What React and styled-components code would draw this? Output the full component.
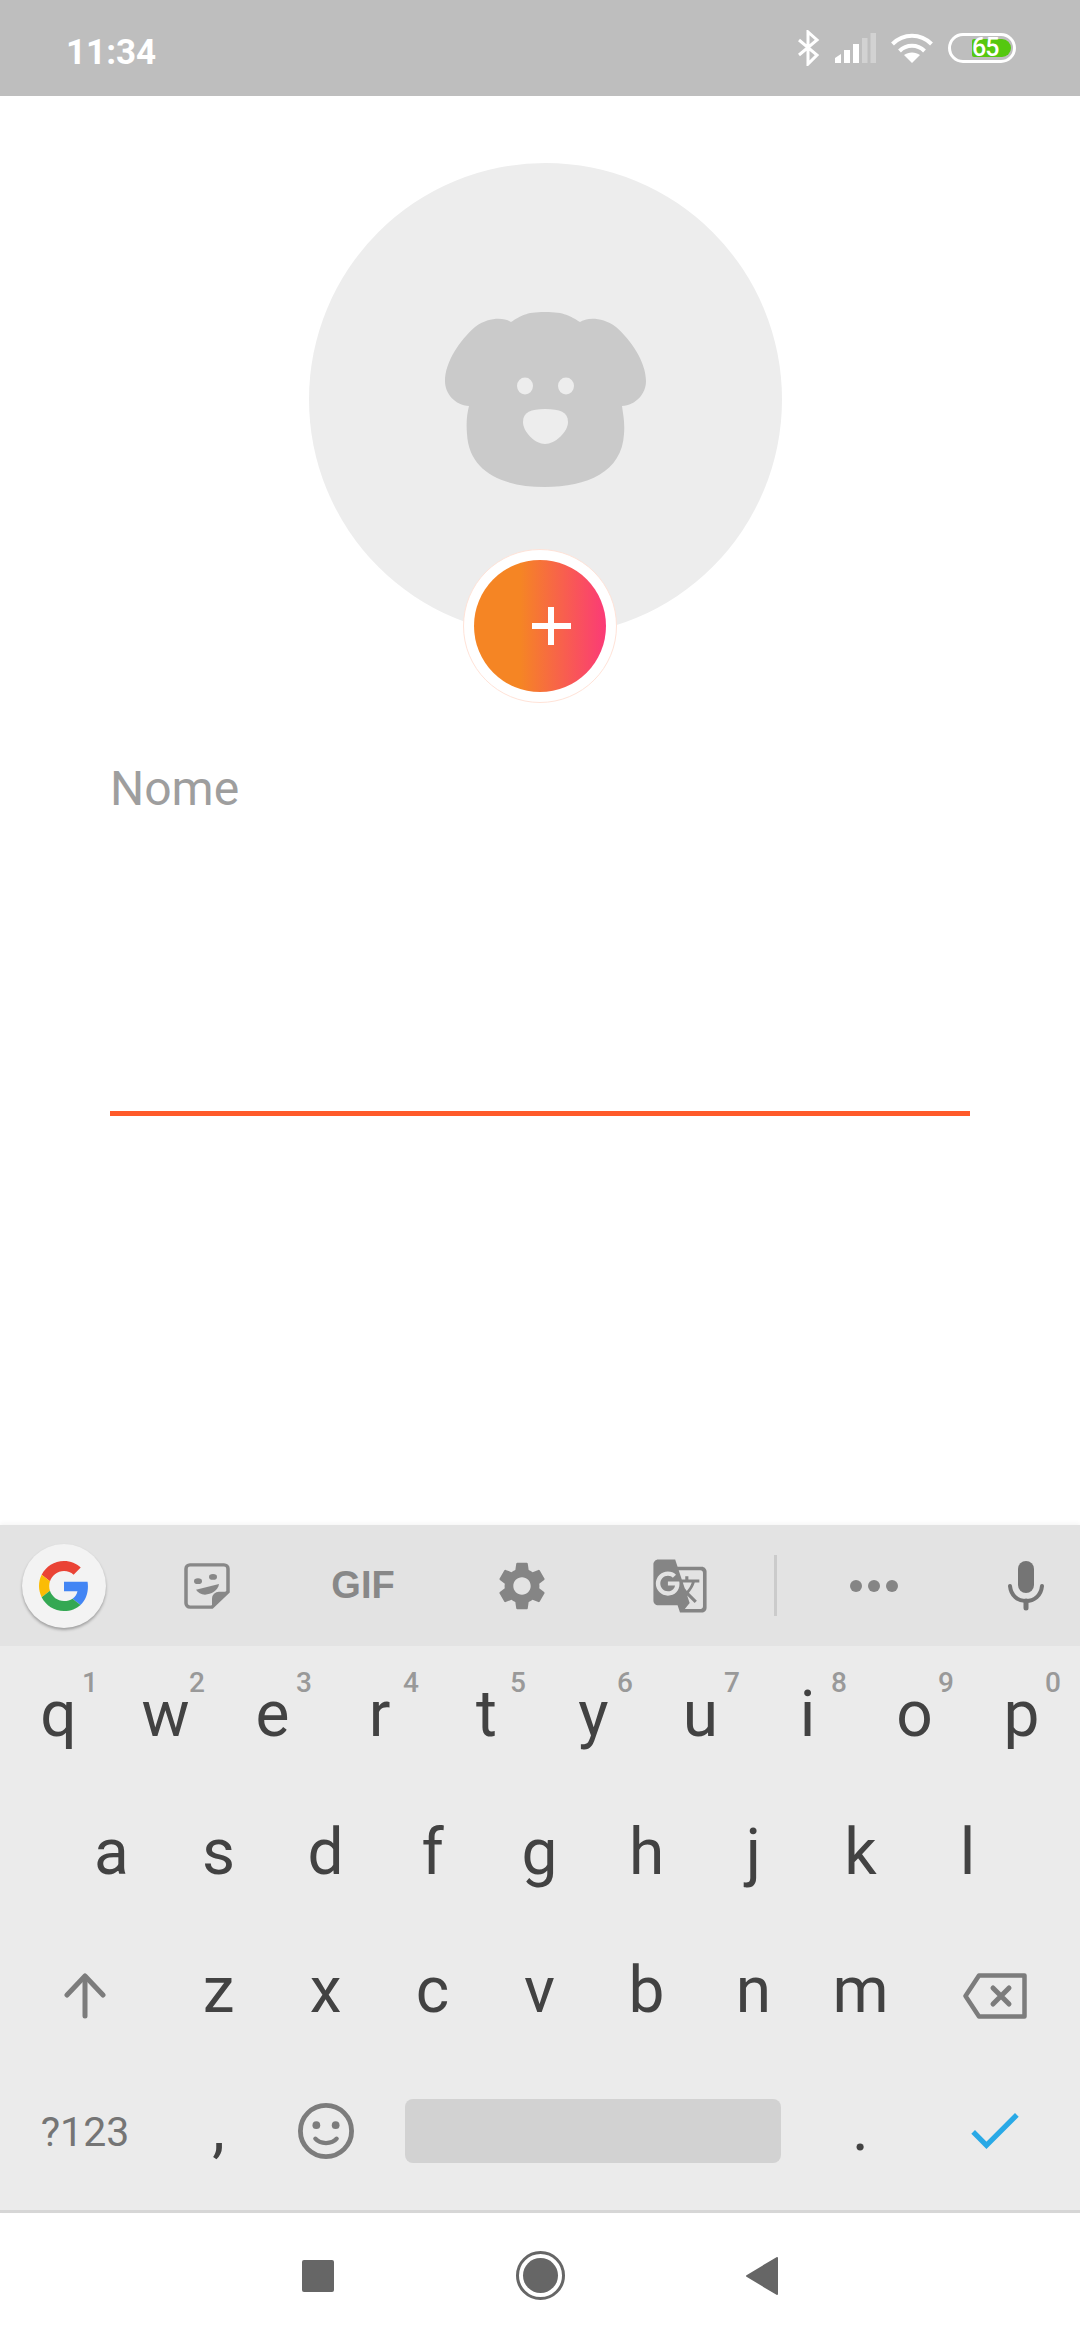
import styled, { createGlobalStyle } from "styled-components";
import { MdSettings, MdGTranslate } from "react-icons/md";

const GlobalStyle = createGlobalStyle`
  html, body {
    margin: 0;
    padding: 0;
    background: #ffffff;
    font-family: "Roboto", "Liberation Sans", sans-serif;
  }
`;

const row1 = [
  ["q", "1"], ["w", "2"], ["e", "3"], ["r", "4"], ["t", "5"],
  ["y", "6"], ["u", "7"], ["i", "8"], ["o", "9"], ["p", "0"],
];
const row2 = ["a", "s", "d", "f", "g", "h", "j", "k", "l"];
const row3 = ["z", "x", "c", "v", "b", "n", "m"];

const DogIcon = () => (
  <svg width="201" height="176" viewBox="0 0 201 176">
    <path
      fill="#cacaca"
      d="M100 0C80 0 76 4 66 10C60 6 45 4 30 15C15 28 0 50 0 69C0 82 10 93 24 94C22 102 21 110 22 122C24 160 58 175 100 175C142 175 177 160 179 122C180 110 178 102 177 94C191 93 201 82 201 69C201 50 186 28 171 15C156 4 141 6 135 10C125 4 120 0 100 0Z"
    />
    <ellipse cx="80" cy="74" rx="8" ry="8.5" fill="#ededed" />
    <ellipse cx="121" cy="74" rx="8" ry="8.5" fill="#ededed" />
    <path
      fill="#ededed"
      d="M100 97C115 97 123 100 123 110C123 120 110 132 100 132C90 132 78 120 78 110C78 100 86 97 100 97Z"
    />
  </svg>
);

const BluetoothIcon = () => (
  <svg width="23" height="36" viewBox="0 0 23 36" fill="none" stroke="#fff" strokeWidth="3">
    <path d="M2 10L20 25L11 34V2L20 10L2 25" />
  </svg>
);

const SignalIcon = () => (
  <svg width="41" height="30" viewBox="0 0 41 30">
    <path fill="#fff" d="M0 30V25L6 21V30Z" />
    <rect x="9" y="17" width="6" height="13" fill="#fff" />
    <rect x="18" y="11" width="6" height="19" fill="#fff" />
    <rect x="27" y="5" width="5.5" height="25" fill="#d2d2d2" />
    <rect x="35.5" y="0" width="5.5" height="30" fill="#d2d2d2" />
  </svg>
);

const WifiIcon = () => (
  <svg width="42" height="30" viewBox="0 0 42 30" fill="none" stroke="#fff" strokeWidth="4">
    <path d="M1.5 11C12.5 0 29.5 0 40.5 11" />
    <path d="M8.5 18C15.5 11 26.5 11 33.5 18" />
    <path fill="#fff" stroke="none" d="M13 22C17.5 18.5 24.5 18.5 29 22L21 30Z" />
  </svg>
);

const GoogleLogo = () => (
  <svg width="50" height="50" viewBox="0 0 48 48">
    <path fill="#EA4335" d="M24 9.5c3.54 0 6.71 1.22 9.21 3.6l6.85-6.85C35.9 2.38 30.47 0 24 0 14.62 0 6.51 5.38 2.56 13.22l7.98 6.19C12.43 13.72 17.74 9.5 24 9.5z" />
    <path fill="#4285F4" d="M46.98 24.55c0-1.57-.15-3.09-.38-4.55H24v9.02h12.94c-.58 2.96-2.26 5.48-4.78 7.18l7.73 6c4.51-4.18 7.09-10.36 7.09-17.65z" />
    <path fill="#FBBC05" d="M10.53 28.59c-.48-1.45-.76-2.99-.76-4.59s.27-3.14.76-4.59l-7.98-6.19C.92 16.46 0 20.12 0 24c0 3.88.92 7.54 2.56 10.78l7.97-6.19z" />
    <path fill="#34A853" d="M24 48c6.48 0 11.93-2.13 15.89-5.81l-7.73-6c-2.15 1.45-4.92 2.3-8.16 2.3-6.26 0-11.57-4.22-13.47-9.91l-7.98 6.19C6.51 42.62 14.62 48 24 48z" />
  </svg>
);

const StickerIcon = () => (
  <svg width="46" height="46" viewBox="0 0 46 48" preserveAspectRatio="none">
    <path
      fill="none"
      stroke="#888"
      strokeWidth="3.5"
      d="M6 2H40a4 4 0 0 1 4 4V30L28 46H6a4 4 0 0 1-4-4V6a4 4 0 0 1 4-4Z"
    />
    <path fill="#888" d="M44.5 30H35a7 7 0 0 0-7 7V46.5Z" />
    <ellipse cx="14" cy="19" rx="4" ry="3" fill="#888" />
    <ellipse cx="29" cy="14.5" rx="4" ry="3" fill="#888" />
    <path fill="#888" d="M12 28L35 22C34 29 27 33 21 33C17 33 14 31 12 28Z" />
  </svg>
);

const MicIcon = () => (
  <svg width="36" height="50" viewBox="0 0 36 50" fill="none" stroke="#757575" strokeLinecap="round">
    <rect x="10" y="0" width="16" height="32" rx="8" fill="#757575" stroke="none" />
    <path strokeWidth="4" d="M2 25C3 35 10 40 18 40C26 40 33 35 34 25" />
    <path strokeWidth="5" d="M18 40V47" />
  </svg>
);

const ShiftIcon = () => (
  <svg width="42" height="46" viewBox="0 0 42 46" fill="none" stroke="#7c7c7c" strokeWidth="5" strokeLinecap="round" strokeLinejoin="round">
    <path d="M21 43V4" />
    <path d="M3 22L21 3L39 22" />
  </svg>
);

const BackspaceIcon = () => (
  <svg width="64" height="46" viewBox="0 0 64 46" fill="none" stroke="#7c7c7c" strokeWidth="4.5" strokeLinejoin="round">
    <path d="M16 2.5H61.5V43.5H16L2.5 23Z" />
    <path strokeLinecap="round" strokeWidth="5" d="M30 15L46 31M46 15L30 31" />
  </svg>
);

const EmojiIcon = () => (
  <svg width="56" height="56" viewBox="0 0 58 58" fill="none" stroke="#7c7c7c">
    <circle cx="29" cy="29" r="26.5" strokeWidth="5" />
    <circle cx="19" cy="23" r="4" fill="#7c7c7c" stroke="none" />
    <circle cx="39" cy="23" r="4" fill="#7c7c7c" stroke="none" />
    <path strokeWidth="4.5" strokeLinecap="round" d="M18 37C23 43 35 43 40 37" />
  </svg>
);

const CheckIcon = () => (
  <svg width="50" height="38" viewBox="0 0 50 40" fill="none" stroke="#29a9e6" strokeWidth="5.5">
    <path d="M2 21L16 35L48 3" />
  </svg>
);

const BackIcon = () => (
  <svg width="32" height="38" viewBox="0 0 32 38">
    <path fill="#666" stroke="#666" strokeWidth="2" strokeLinejoin="round" d="M1 19L31 1V37Z" />
  </svg>
);

export default function App() {
  return (
    <>
      <GlobalStyle />
      <Screen>
        <StatusBar>
          <Clock>11:34</Clock>
          <StatusIcons>
            <BluetoothIcon />
            <SignalIcon />
            <WifiIcon />
            <Battery>
              <BatteryFill />
              <BatteryLevel>65</BatteryLevel>
            </Battery>
          </StatusIcons>
        </StatusBar>

        <Main>
          <Avatar>
            <DogIcon />
            <AddButton>
              <AddCircle>
                <PlusH />
                <PlusV />
              </AddCircle>
            </AddButton>
          </Avatar>
          <Field>
            <FieldLabel>Nome</FieldLabel>
            <FieldLine />
          </Field>
        </Main>

        <Keyboard>
          <Toolbar>
            <ToolSlot $w={128}>
              <GoogleButton>
                <GoogleLogo />
              </GoogleButton>
            </ToolSlot>
            <ToolSlot $w={158}>
              <StickerIcon />
            </ToolSlot>
            <ToolSlot $w={154}>
              <GifLabel>GIF</GifLabel>
            </ToolSlot>
            <ToolSlot $w={164}>
              <MdSettings size={58} color="#858585" />
            </ToolSlot>
            <ToolSlot $w={152}>
              <MdGTranslate size={58} color="#858585" />
            </ToolSlot>
            <ToolSlot $w={39}>
              <ToolDivider />
            </ToolSlot>
            <ToolSlot $w={158}>
              <Dots>
                <Dot />
                <Dot />
                <Dot />
              </Dots>
            </ToolSlot>
            <MicSlot>
              <MicIcon />
            </MicSlot>
          </Toolbar>

          <KeyRow $pad={5}>
            {row1.map(([letter, hint]) => (
              <Key key={letter} $w={107}>
                {letter}
                <KeyHint>{hint}</KeyHint>
              </Key>
            ))}
          </KeyRow>
          <KeyRow $pad={58}>
            {row2.map((letter) => (
              <Key key={letter} $w={107}>
                {letter}
              </Key>
            ))}
          </KeyRow>
          <KeyRow $pad={5}>
            <IconKey $w={160} $shift={5}>
              <ShiftIcon />
            </IconKey>
            {row3.map((letter) => (
              <Key key={letter} $w={107}>
                {letter}
              </Key>
            ))}
            <IconKey $w={161} $shift={5}>
              <BackspaceIcon />
            </IconKey>
          </KeyRow>
          <KeyRow $pad={5}>
            <SymbolKey $w={160}>?123</SymbolKey>
            <Key $w={107}>,</Key>
            <IconKey $w={107} $shift={2}>
              <EmojiIcon />
            </IconKey>
            <SpaceKey>
              <SpaceBar />
            </SpaceKey>
            <Key $w={107}>.</Key>
            <IconKey $w={161} $shift={2}>
              <CheckIcon />
            </IconKey>
          </KeyRow>
        </Keyboard>

        <NavBar>
          <NavSlot>
            <NavSquare />
          </NavSlot>
          <NavSlot>
            <NavHome>
              <NavHomeDot />
            </NavHome>
          </NavSlot>
          <NavSlot>
            <BackIcon />
          </NavSlot>
        </NavBar>
      </Screen>
    </>
  );
}

const Screen = styled.div`
  width: 1080px;
  height: 2340px;
  display: flex;
  flex-direction: column;
  overflow: hidden;
  background: #ffffff;
`;

const StatusBar = styled.div`
  height: 96px;
  flex: none;
  display: flex;
  align-items: center;
  justify-content: space-between;
  padding: 0 64px 0 66px;
  background: #bebebe;
`;

const Clock = styled.span`
  font-size: 35px;
  font-weight: 700;
  color: #ffffff;
  padding-top: 8px;
`;

const StatusIcons = styled.div`
  display: flex;
  align-items: center;
  gap: 15px;
`;

const Battery = styled.div`
  position: relative;
  box-sizing: border-box;
  width: 68px;
  height: 30px;
  border: 3px solid #ffffff;
  border-radius: 15px;
  display: flex;
  align-items: center;
  justify-content: flex-end;
  padding-right: 2px;
`;

const BatteryFill = styled.div`
  width: 39px;
  height: 18px;
  background: #55c80f;
  border-radius: 2px 9px 9px 2px;
`;

const BatteryLevel = styled.span`
  position: absolute;
  left: 21px;
  top: -3px;
  font-size: 25px;
  line-height: 30px;
  font-weight: 500;
  color: #ffffff;
  letter-spacing: -1px;
`;

const Main = styled.div`
  flex: 1;
  display: flex;
  flex-direction: column;
  padding-top: 67px;
`;

const Avatar = styled.div`
  position: relative;
  width: 473px;
  height: 473px;
  margin-left: 309px;
  flex: none;
  border-radius: 50%;
  background: #ededed;
  display: flex;
  align-items: center;
  justify-content: center;
`;

const AddButton = styled.div`
  position: absolute;
  left: 154px;
  top: 386px;
  box-sizing: border-box;
  width: 154px;
  height: 154px;
  border-radius: 50%;
  background: #ffffff;
  border: 1px solid #ffe3d8;
  display: flex;
  align-items: center;
  justify-content: center;
`;

const AddCircle = styled.div`
  position: relative;
  width: 132px;
  height: 132px;
  border-radius: 50%;
  background: linear-gradient(90deg, #f58524 0%, #f58524 35%, #fb3a77 100%);
`;

const PlusH = styled.span`
  position: absolute;
  left: 58px;
  top: 63px;
  width: 39px;
  height: 6px;
  background: #ffffff;
`;

const PlusV = styled.span`
  position: absolute;
  left: 74px;
  top: 47px;
  width: 6px;
  height: 38px;
  background: #ffffff;
`;

const Field = styled.div`
  display: flex;
  flex-direction: column;
  padding: 0 110px;
  margin-top: 126px;
`;

const FieldLabel = styled.label`
  font-size: 48px;
  line-height: 54px;
  color: #9e9e9e;
`;

const FieldLine = styled.div`
  height: 5px;
  margin-top: 295px;
  background: #ff5a2a;
`;

const Keyboard = styled.div`
  flex: none;
  display: flex;
  flex-direction: column;
  padding-bottom: 12px;
  background: #ebebeb;
  border-bottom: 3px solid #d6d6d6;
  box-shadow: 0 -2px 4px rgba(0, 0, 0, 0.04);
`;

const Toolbar = styled.div`
  height: 121px;
  display: flex;
  align-items: center;
  background: #e3e3e3;
`;

const ToolSlot = styled.div`
  width: ${(p) => p.$w}px;
  flex: none;
  display: flex;
  align-items: center;
  justify-content: center;
`;

const MicSlot = styled.div`
  width: 106px;
  margin-left: 20px;
  flex: none;
  display: flex;
  align-items: center;
  justify-content: center;
`;

const GoogleButton = styled.div`
  width: 84px;
  height: 84px;
  border-radius: 50%;
  background: #f3f3f3;
  box-shadow: 0 2px 3px rgba(0, 0, 0, 0.3);
  display: flex;
  align-items: center;
  justify-content: center;
`;

const GifLabel = styled.span`
  font-family: "Liberation Sans", sans-serif;
  font-size: 38px;
  font-weight: 700;
  color: #888888;
`;

const ToolDivider = styled.div`
  width: 3px;
  height: 61px;
  background: #cbcbcb;
`;

const Dots = styled.div`
  display: flex;
  gap: 6px;
`;

const Dot = styled.span`
  width: 12px;
  height: 12px;
  border-radius: 50%;
  background: #858585;
`;

const KeyRow = styled.div`
  height: 138px;
  display: flex;
  padding: 0 ${(p) => p.$pad}px;
`;

const Key = styled.div`
  position: relative;
  width: ${(p) => p.$w}px;
  flex: none;
  line-height: 138px;
  text-align: center;
  font-size: 64px;
  color: #424242;
`;

const KeyHint = styled.span`
  position: absolute;
  right: 14px;
  top: 22px;
  font-size: 28px;
  line-height: 30px;
  font-weight: 500;
  color: #999999;
`;

const IconKey = styled.div`
  box-sizing: border-box;
  width: ${(p) => p.$w}px;
  flex: none;
  padding-top: ${(p) => p.$shift * 2}px;
  display: flex;
  align-items: center;
  justify-content: center;
`;

const SymbolKey = styled.div`
  width: ${(p) => p.$w}px;
  flex: none;
  line-height: 144px;
  text-align: center;
  font-size: 41px;
  color: #757575;
`;

const SpaceKey = styled.div`
  flex: 1;
  display: flex;
  align-items: center;
  padding: 4px 26px 0;
  box-sizing: border-box;
`;

const SpaceBar = styled.div`
  width: 100%;
  height: 64px;
  border-radius: 8px;
  background: #d2d2d2;
`;

const NavBar = styled.div`
  height: 127px;
  flex: none;
  display: flex;
  align-items: center;
  justify-content: center;
  padding-bottom: 2px;
  box-sizing: border-box;
`;

const NavSlot = styled.div`
  width: 222px;
  display: flex;
  align-items: center;
  justify-content: center;
`;

const NavSquare = styled.div`
  width: 32px;
  height: 32px;
  border-radius: 2px;
  background: #666666;
`;

const NavHome = styled.div`
  box-sizing: border-box;
  width: 49px;
  height: 49px;
  border: 3px solid #666666;
  border-radius: 50%;
  display: flex;
  align-items: center;
  justify-content: center;
`;

const NavHomeDot = styled.div`
  width: 35px;
  height: 35px;
  border-radius: 50%;
  background: #666666;
`;
